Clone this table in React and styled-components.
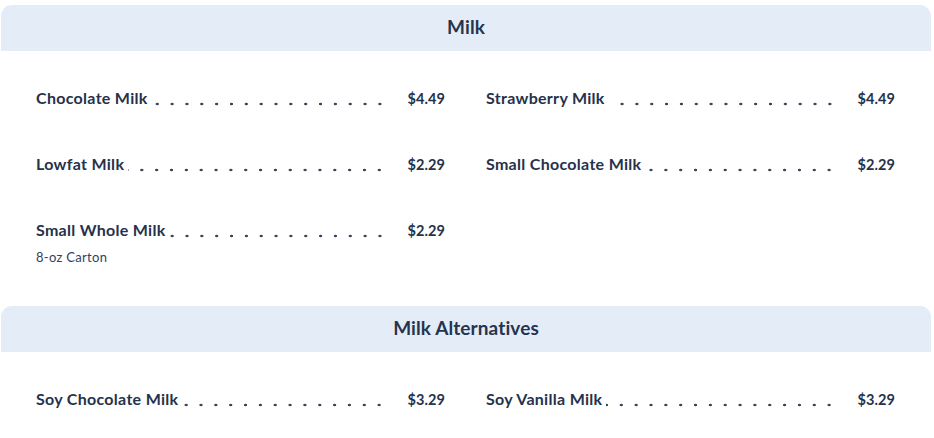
import styled, { createGlobalStyle } from 'styled-components';

const GlobalStyle = createGlobalStyle`
  html, body {
    margin: 0;
    padding: 0;
    background: #ffffff;
  }
  body {
    font-family: Lato, "Noto Sans", "Liberation Sans", sans-serif;
    color: #25324a;
  }
`;

const Page = styled.div`
  display: flex;
  flex-direction: column;
  padding: 5px 3px 0 1px;
`;

const Section = styled.section`
  display: flex;
  flex-direction: column;
`;

const Header = styled.h2`
  margin: 0;
  height: 46px;
  box-sizing: border-box;
  padding-bottom: 3px;
  display: flex;
  align-items: center;
  justify-content: center;
  background-color: #e4edf7;
  border-radius: 11px 11px 0 0;
  font-size: 19px;
  font-weight: 700;
  color: #26344d;
  letter-spacing: 0.1px;
`;

const Grid = styled.div`
  display: grid;
  grid-template-columns: 1fr 1fr;
  column-gap: 41px;
  row-gap: 46px;
  padding: 37px 36px 40px 35px;
`;

const Item = styled.div`
  display: flex;
  flex-direction: column;
  gap: 9px;
  min-width: 0;
`;

const Line = styled.div`
  display: flex;
  align-items: baseline;
  height: 20px;
`;

const Name = styled.span`
  font-size: 16px;
  font-weight: 700;
  line-height: 20px;
  letter-spacing: 0.3px;
  white-space: nowrap;
  color: #25324a;
`;

const Leader = styled.span`
  flex: 1;
  align-self: flex-end;
  height: 20px;
  margin-left: 4px;
  background-image: radial-gradient(circle, #3a465c 1.2px, transparent 1.6px);
  background-size: 14.85px 4px;
  background-repeat: repeat-x;
  background-position: right 0 bottom 2px;
`;

const Price = styled.span`
  width: 58px;
  flex-shrink: 0;
  text-align: right;
  font-size: 14.5px;
  font-weight: 700;
  line-height: 20px;
  letter-spacing: 0.1px;
  color: #25324a;
`;

const Description = styled.span`
  font-size: 13px;
  line-height: 17px;
  letter-spacing: 0.3px;
  color: #34405a;
`;

const sections = [
  {
    title: 'Milk',
    items: [
      { name: 'Chocolate Milk', price: '$4.49' },
      { name: 'Strawberry Milk', price: '$4.49' },
      { name: 'Lowfat Milk', price: '$2.29' },
      { name: 'Small Chocolate Milk', price: '$2.29' },
      { name: 'Small Whole Milk', price: '$2.29', description: '8-oz Carton' },
    ],
  },
  {
    title: 'Milk Alternatives',
    items: [
      { name: 'Soy Chocolate Milk', price: '$3.29' },
      { name: 'Soy Vanilla Milk', price: '$3.29' },
    ],
  },
];

const MenuItem = ({ name, price, description }) => (
  <Item>
    <Line>
      <Name>{name}</Name>
      <Leader />
      <Price>{price}</Price>
    </Line>
    {description && <Description>{description}</Description>}
  </Item>
);

const App = () => (
  <>
    <GlobalStyle />
    <Page>
      {sections.map((section) => (
        <Section key={section.title}>
          <Header>{section.title}</Header>
          <Grid>
            {section.items.map((item) => (
              <MenuItem key={item.name} {...item} />
            ))}
          </Grid>
        </Section>
      ))}
    </Page>
  </>
);

export default App;
